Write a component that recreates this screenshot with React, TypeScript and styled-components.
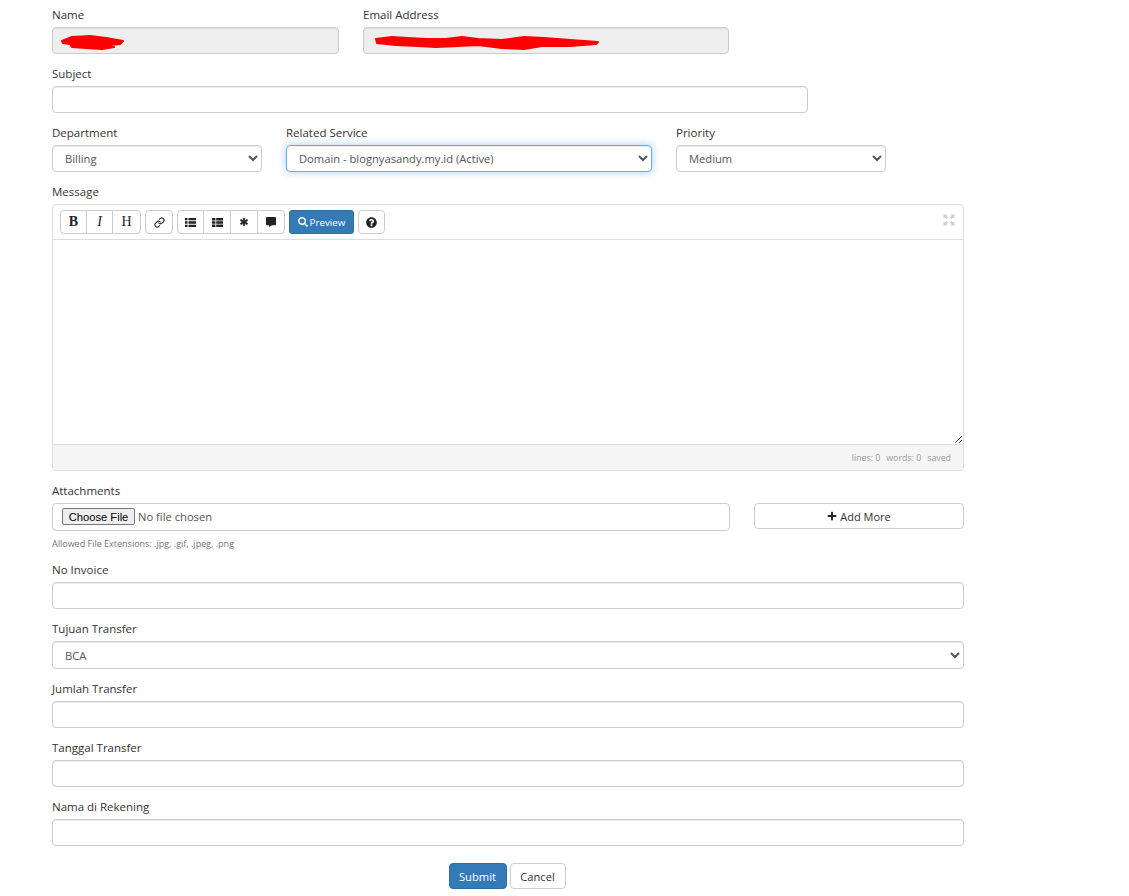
import styled, { createGlobalStyle } from "styled-components";
import { FaAsterisk, FaCommentAlt, FaSearch, FaQuestionCircle, FaPlus } from "react-icons/fa";
import { Link as ChainIcon } from "lucide-react";

const GlobalStyle = createGlobalStyle`
  html, body {
    margin: 0;
    padding: 0;
    background: #fff;
    font-family: "Open Sans", "Liberation Sans", sans-serif;
    color: #333;
  }
  * {
    box-sizing: border-box;
  }
`;

const Form = styled.form`
  width: 912px;
  margin-left: 52px;
  padding-top: 8px;
  display: flex;
  flex-direction: column;
`;

const Group = styled.div<{ $w?: number }>`
  width: ${({ $w }) => ($w ? `${$w}px` : "100%")};
  margin-bottom: 13px;
  flex: none;
`;

const Row = styled.div<{ $gap: number }>`
  display: flex;
  gap: ${({ $gap }) => $gap}px;
`;

const Label = styled.label`
  display: block;
  font-size: 11.5px;
  font-weight: 500;
  line-height: 13px;
  margin-bottom: 6px;
  color: #333;
`;

const TextInput = styled.input`
  display: block;
  width: 100%;
  height: 27px;
  padding: 0 12px;
  font: 11.2px "Open Sans", sans-serif;
  color: #555;
  background: ${({ disabled }) => (disabled ? "#eee" : "#fff")};
  border: 1px solid #ccc;
  border-radius: 4px;
  box-shadow: inset 0 1px 1px rgba(0, 0, 0, 0.075);
  outline: none;
`;

const Redacted = styled.div`
  position: relative;
`;

const Scribble = styled.svg<{ $left: number; $top: number }>`
  position: absolute;
  left: ${({ $left }) => $left}px;
  top: ${({ $top }) => $top}px;
  fill: #ff0000;
  stroke: #ff0000;
  stroke-linecap: round;
  stroke-linejoin: round;
`;

const Select = styled.select<{ $focus?: boolean; $h?: number }>`
  display: block;
  width: 100%;
  height: ${({ $h }) => $h || 27}px;
  padding: 0 8px;
  font: 11.2px "Open Sans", sans-serif;
  color: #555;
  background-color: #fff;
  border: 1px solid ${({ $focus }) => ($focus ? "#66afe9" : "#ccc")};
  border-radius: 4px;
  outline: none;
  box-shadow: ${({ $focus }) =>
    $focus
      ? "inset 0 1px 1px rgba(0,0,0,.075), 0 0 8px rgba(102,175,233,.6)"
      : "inset 0 1px 1px rgba(0,0,0,.075)"};
`;

const Editor = styled.div`
  height: 267px;
  border: 1px solid #ddd;
  border-radius: 4px;
  display: flex;
  flex-direction: column;
  overflow: hidden;
`;

const Toolbar = styled.div`
  height: 35px;
  flex: none;
  padding: 5px 7px 0;
  display: flex;
  align-items: flex-start;
  gap: 4px;
  border-bottom: 1px solid #ddd;
`;

const BtnGroup = styled.div`
  display: flex;
`;

const ToolButton = styled.button<{ $w: number; $serif?: "bold" | "italic" }>`
  width: ${({ $w }) => $w}px;
  height: 24px;
  padding: 0;
  margin-left: -1px;
  display: flex;
  align-items: center;
  justify-content: center;
  background: #fff;
  color: #222;
  border: 1px solid #ccc;
  font-family: "Liberation Serif", serif;
  font-size: 14px;
  font-weight: ${({ $serif }) => ($serif === "bold" ? 700 : 400)};
  font-style: ${({ $serif }) => ($serif === "italic" ? "italic" : "normal")};

  &:first-child {
    margin-left: 0;
    border-radius: 4px 0 0 4px;
  }
  &:last-child {
    border-radius: 0 4px 4px 0;
  }
  &:only-child {
    border-radius: 4px;
  }
  svg {
    font-size: 10px;
  }
`;

const PreviewButton = styled.button`
  width: 65px;
  height: 24px;
  padding: 0;
  display: flex;
  align-items: center;
  justify-content: center;
  gap: 2px;
  background: #337ab7;
  color: #fff;
  border: 1px solid #2e6da4;
  border-radius: 3px;
  font: 400 9.8px "Open Sans", sans-serif;
  svg {
    font-size: 10px;
  }
`;

const ExpandIcon = styled.svg`
  margin-left: auto;
  margin-top: 4px;
  margin-right: 1px;
  color: #ccc;
`;

const EditArea = styled.textarea`
  flex: 1;
  width: 100%;
  border: none;
  outline: none;
  display: block;
  padding: 6px 12px;
`;

const StatusBar = styled.div`
  height: 26px;
  flex: none;
  display: flex;
  align-items: center;
  justify-content: flex-end;
  gap: 6px;
  padding-right: 12px;
  background: #f5f5f5;
  border-top: 1px solid #ddd;
  font-size: 8.8px;
  color: #999;
`;

const FileField = styled.input`
  display: block;
  width: 100%;
  height: 28px;
  padding: 4px 9px;
  border: 1px solid #ccc;
  border-radius: 4px;
  font: 11.2px "Open Sans", sans-serif;
  color: #555;
  background: #fff;
  &::file-selector-button {
    font: 11.2px "Liberation Sans", Arial, sans-serif;
    height: 17px;
    width: 73px;
    padding: 0;
    margin-right: 3px;
    color: #000;
    background: #efefef;
    border: 1px solid #767676;
    border-radius: 2px;
  }
`;

const AddMore = styled.button`
  width: 210px;
  height: 26px;
  display: flex;
  align-items: center;
  justify-content: center;
  gap: 3px;
  background: #fff;
  color: #333;
  border: 1px solid #ccc;
  border-radius: 4px;
  font: 11px "Open Sans", sans-serif;
  margin-top: 19px;
  svg {
    font-size: 10px;
    color: #222;
  }
`;

const HelpText = styled.div`
  font-size: 9px;
  line-height: 12px;
  color: #737373;
  margin-top: 7px;
`;

const Actions = styled.div`
  display: flex;
  justify-content: center;
  gap: 3px;
  margin-top: 4px;
  padding-right: 2px;
`;

const ActionButton = styled.button<{ $primary?: boolean }>`
  height: 26px;
  width: ${({ $primary }) => ($primary ? 58 : 56)}px;
  padding: 0;
  font: 11.2px "Open Sans", sans-serif;
  font-weight: ${({ $primary }) => ($primary ? 500 : 400)};
  color: ${({ $primary }) => ($primary ? "#fff" : "#333")};
  background: ${({ $primary }) => ($primary ? "#337ab7" : "#fff")};
  border: 1px solid ${({ $primary }) => ($primary ? "#2e6da4" : "#ccc")};
  border-radius: 4px;
`;

const ListIcon = () => (
  <svg width="11" height="9" viewBox="0 0 11 9" fill="#222">
    <path d="M0 0h2.5v2.3H0zM3.5 0H11v2.3H3.5zM0 3.35h2.5v2.3H0zM3.5 3.35H11v2.3H3.5zM0 6.7h2.5V9H0zM3.5 6.7H11V9H3.5z" />
  </svg>
);

const ThListIcon = () => (
  <svg width="11" height="9" viewBox="0 0 11 9" fill="#222">
    <path d="M0 0h3.4v2.6H0zM4.2 0H11v2.6H4.2zM0 3.2h3.4v2.6H0zM4.2 3.2H11v2.6H4.2zM0 6.4h3.4V9H0zM4.2 6.4H11V9H4.2z" />
  </svg>
);

function App() {
  return (
    <>
      <GlobalStyle />
      <Form>
        <Row $gap={24}>
          <Group $w={287}>
            <Label>Name</Label>
            <Redacted>
              <TextInput disabled />
              <Scribble $left={8} $top={7} width="66" height="18" viewBox="0 0 66 18" strokeWidth="2">
                <path d="M2 7 L12 3 L30 2 L46 4 L63 7 L60 10 L50 11 L54 13 L42 15 L26 14 L12 13 L10 10 L3 9 Z" />
              </Scribble>
            </Redacted>
          </Group>
          <Group $w={366}>
            <Label>Email Address</Label>
            <Redacted>
              <TextInput disabled />
              <Scribble $left={11} $top={8} width="228" height="16" viewBox="0 0 228 16" strokeWidth="2">
                <path d="M2 4 L18 2 L34 3 L52 4 L72 4 L88 2 L104 4 L128 5 L150 2 L170 3 L196 5 L224 7 L222 9 L196 11 L168 11 L150 14 L128 13 L104 10 L84 11 L62 12 L44 11 L22 10 L3 8 Z" />
              </Scribble>
            </Redacted>
          </Group>
        </Row>

        <Group $w={756}>
          <Label>Subject</Label>
          <TextInput />
        </Group>

        <Row $gap={24}>
          <Group $w={210}>
            <Label>Department</Label>
            <Select defaultValue="Billing">
              <option>Billing</option>
            </Select>
          </Group>
          <Group $w={366}>
            <Label>Related Service</Label>
            <Select $focus>
              <option>Domain - blognyasandy.my.id (Active)</option>
            </Select>
          </Group>
          <Group $w={210}>
            <Label>Priority</Label>
            <Select>
              <option>Medium</option>
            </Select>
          </Group>
        </Row>

        <Group>
          <Label>Message</Label>
          <Editor>
            <Toolbar>
              <BtnGroup>
                <ToolButton type="button" $w={27} $serif="bold">B</ToolButton>
                <ToolButton type="button" $w={27} $serif="italic">I</ToolButton>
                <ToolButton type="button" $w={29}>H</ToolButton>
              </BtnGroup>
              <BtnGroup>
                <ToolButton type="button" $w={28}><ChainIcon size={11} strokeWidth={2.2} /></ToolButton>
              </BtnGroup>
              <BtnGroup>
                <ToolButton type="button" $w={27}><ListIcon /></ToolButton>
                <ToolButton type="button" $w={28}><ThListIcon /></ToolButton>
                <ToolButton type="button" $w={28}><FaAsterisk style={{ fontSize: 8, stroke: "#222", strokeWidth: 50 }} /></ToolButton>
                <ToolButton type="button" $w={28}><FaCommentAlt /></ToolButton>
              </BtnGroup>
              <PreviewButton type="button"><FaSearch />Preview</PreviewButton>
              <BtnGroup>
                <ToolButton type="button" $w={27}><FaQuestionCircle style={{ fontSize: 11 }} /></ToolButton>
              </BtnGroup>
              <ExpandIcon width="12" height="12" viewBox="0 0 12 12" fill="currentColor">
                <path d="M0.5 0.5 H4.5 L3.2 1.8 L5 3.6 L3.6 5 L1.8 3.2 L0.5 4.5 Z" />
                <path d="M11.5 0.5 H7.5 L8.8 1.8 L7 3.6 L8.4 5 L10.2 3.2 L11.5 4.5 Z" />
                <path d="M0.5 11.5 H4.5 L3.2 10.2 L5 8.4 L3.6 7 L1.8 8.8 L0.5 7.5 Z" />
                <path d="M11.5 11.5 H7.5 L8.8 10.2 L7 8.4 L8.4 7 L10.2 8.8 L11.5 7.5 Z" />
              </ExpandIcon>
            </Toolbar>
            <EditArea />
            <StatusBar>
              <span>lines: 0</span>
              <span>words: 0</span>
              <span>saved</span>
            </StatusBar>
          </Editor>
        </Group>

        <Row $gap={24}>
          <Group $w={678}>
            <Label>Attachments</Label>
            <FileField type="file" />
            <HelpText>Allowed File Extensions: .jpg, .gif, .jpeg, .png</HelpText>
          </Group>
          <AddMore type="button"><FaPlus />Add More</AddMore>
        </Row>

        <Group>
          <Label>No Invoice</Label>
          <TextInput />
        </Group>
        <Group>
          <Label>Tujuan Transfer</Label>
          <Select $h={28}>
            <option>BCA</option>
          </Select>
        </Group>
        <Group>
          <Label>Jumlah Transfer</Label>
          <TextInput />
        </Group>
        <Group>
          <Label>Tanggal Transfer</Label>
          <TextInput />
        </Group>
        <Group>
          <Label>Nama di Rekening</Label>
          <TextInput />
        </Group>

        <Actions>
          <ActionButton type="button" $primary>Submit</ActionButton>
          <ActionButton type="button">Cancel</ActionButton>
        </Actions>
      </Form>
    </>
  );
}

export default App;
